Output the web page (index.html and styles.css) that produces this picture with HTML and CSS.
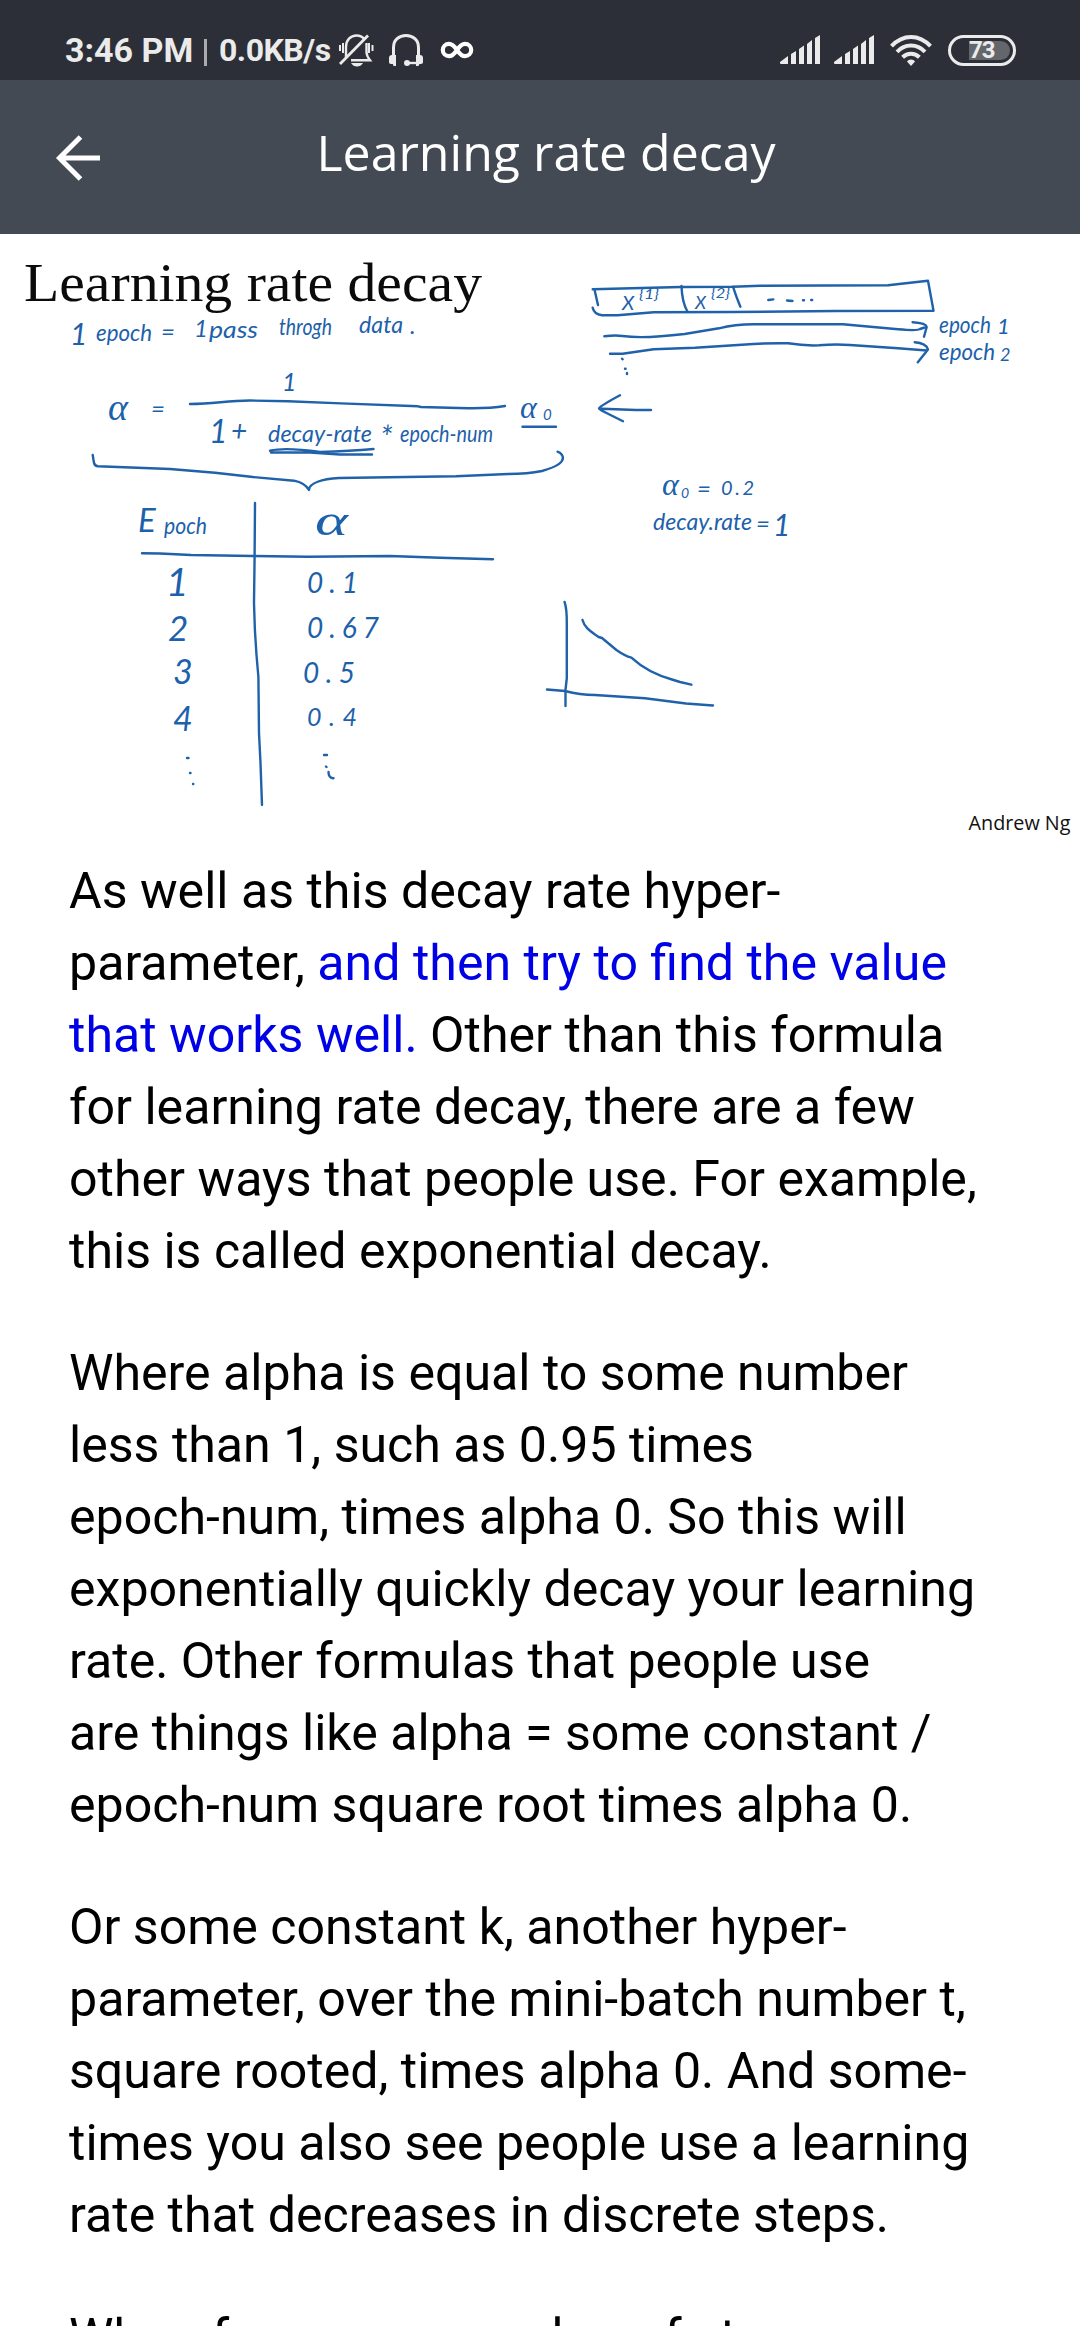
FILE: index.html
```html
<!DOCTYPE html>
<html lang="en">
<head>
<meta charset="utf-8">
<title>Learning rate decay</title>
<link rel="stylesheet" href="styles.css">
</head>
<body>
<div class="screen">
  <div class="status">
    <div class="status-left">
      <span class="clock">3:46 PM</span>
      <span class="bar"></span>
      <span class="speed">0.0KB/s</span>
      <svg class="bell" width="36" height="36" viewBox="0 0 36 36" fill="none" stroke="currentColor" stroke-width="2.4">
        <path d="M8 25V15C8 8 12.500 3.500 18.500 3.500c3.500 0 6 1.300 7.800 3.400M28.500 11v9c0 3 1 5 3.500 8.200H13"/>
        <path d="M2 32L30 3.500" stroke-width="2.800"/>
        <path d="M2 13v6M5 11v10M31 11v10M34.500 13v6" stroke-width="2"/>
        <path d="M13 31h12c-1.500 2.400-3.500 3.500-6 3.500S14.500 33.400 13 31z" fill="currentColor" stroke="none"/>
      </svg>
      <svg class="headset" width="36" height="36" viewBox="0 0 36 36" fill="none" stroke="currentColor" stroke-width="3">
        <path d="M5.500 25V15.500C5.500 8 11 3.500 18 3.500s12.500 4.500 12.500 12V25"/>
        <path d="M19 31h13" stroke-width="2.400"/>
        <circle cx="19" cy="31" r="3" fill="currentColor" stroke="none"/>
        <path d="M4 23h4v11H5.500l-.7-2H3c-1.300 0-2-.8-2-2v-4c0-2 1-3 3-3zM32 23h-4v11h2.500l.7-2H33c1.300 0 2-.8 2-2v-4c0-2-1-3-3-3z" fill="currentColor" stroke="none"/>
      </svg>
      <svg class="infinity" width="34" height="20" viewBox="0 0 34 20" fill="none" stroke="#fff" stroke-width="4.200">
        <path d="M17 10C14 5.500 12 3.800 9 3.800a6.200 6.200 0 0 0 0 12.400c3.500 0 5.500-2.500 8-6.200s4.500-6.200 8-6.200a6.200 6.200 0 0 1 0 12.400c-3 0-5-1.700-8-6.200z"/>
      </svg>
    </div>
    <div class="status-right">
      <svg class="signal" width="40" height="30" viewBox="0 0 40 30" fill="currentColor"><path d="M0 27l8-6v8H1q-1 0-1-1zM11 19l5-3v13h-5zM19 14l5-3.500V29h-5zM27 9l5-4v24h-5zM35 3l5-3v29h-5z"/></svg>
      <svg class="signal" width="40" height="30" viewBox="0 0 40 30" fill="currentColor"><path d="M0 27l8-6v8H1q-1 0-1-1zM11 19l5-3v13h-5zM19 14l5-3.500V29h-5zM27 9l5-4v24h-5zM35 3l5-3v29h-5z"/></svg>
      <svg class="wifi" width="42" height="31" viewBox="0 0 42 31" fill="none" stroke="currentColor" stroke-width="4">
        <path d="M1.500 11.200C13-1 29-1 40.500 11.200M7 16.800c8-8.300 20-8.300 28 0M12.600 22.300c5-4.800 11.800-4.800 16.800 0"/>
        <path d="M21 24.500c2 0 3 .8 4 2L21 31l-4-4.500c1-1.200 2-2 4-2z" fill="currentColor" stroke="none"/>
      </svg>
      <div class="battery"><div class="charge">73</div></div>
    </div>
  </div>

  <div class="header">
    <svg class="back" width="46" height="46" viewBox="0 0 46 46" fill="none" stroke="#fff" stroke-width="5"><path d="M45 23H4M25.500 2L4.500 23l21 21"/></svg>
    <h1>Learning rate decay</h1>
  </div>

  <div class="reader">
    <svg class="slide" width="1080" height="607" viewBox="0 234 1080 607">
      <text class="slide-title" x="24" y="301" textLength="458" lengthAdjust="spacingAndGlyphs">Learning rate decay</text>

      <g class="hand">
        <text x="70" y="345" font-size="30">1</text>
        <text x="96" y="341" textLength="56" lengthAdjust="spacingAndGlyphs">epoch</text>
        <text x="161" y="340">=</text>
        <text x="194" y="337" font-size="24">1</text>
        <text x="209" y="338" textLength="49" lengthAdjust="spacingAndGlyphs">pass</text>
        <text x="279" y="335" textLength="53" lengthAdjust="spacingAndGlyphs">throgh</text>
        <text x="359" y="333" textLength="44" lengthAdjust="spacingAndGlyphs">data</text>
        <text x="410" y="334">.</text>

        <text class="alpha" x="108" y="420" font-size="38">α</text>
        <text x="151" y="417">=</text>
        <text x="282" y="391" font-size="25">1</text>
        <text x="209" y="443" font-size="32">1</text>
        <text x="231" y="441" font-size="28">+</text>
        <text x="268" y="442" textLength="104" lengthAdjust="spacingAndGlyphs">decay-rate</text>
        <text x="380" y="449" font-size="32">*</text>
        <text x="400" y="442" textLength="93" lengthAdjust="spacingAndGlyphs">epoch-num</text>
        <text class="alpha" x="520" y="418" font-size="32">α</text>
        <text x="543" y="420" font-size="15">0</text>

        <text x="138" y="532" font-size="33">E</text>
        <text x="164" y="534" textLength="43" lengthAdjust="spacingAndGlyphs">poch</text>
        <text class="alpha" x="315" y="535" font-size="44" textLength="33" lengthAdjust="spacingAndGlyphs">α</text>
        <text x="166" y="596" font-size="39">1</text>
        <text x="168" y="641" font-size="35">2</text>
        <text x="173" y="684" font-size="34">3</text>
        <text x="173" y="731" font-size="34">4</text>
        <text x="307" y="593" font-size="28" textLength="51" lengthAdjust="spacing">0.1</text>
        <text x="307" y="638" font-size="28" textLength="72" lengthAdjust="spacing">0.67</text>
        <text x="303" y="683" font-size="28" textLength="52" lengthAdjust="spacing">0.5</text>
        <text x="307" y="726" font-size="25" textLength="50" lengthAdjust="spacing">0.4</text>

        <text x="622" y="310" font-size="20">X</text>
        <text x="639" y="299" font-size="13" textLength="20" lengthAdjust="spacingAndGlyphs">{1}</text>
        <text x="695" y="309" font-size="18">X</text>
        <text x="711" y="298" font-size="13" textLength="19" lengthAdjust="spacingAndGlyphs">{2}</text>
        <text x="939" y="333" textLength="52" lengthAdjust="spacingAndGlyphs">epoch</text>
        <text x="997" y="334" font-size="22">1</text>
        <text x="939" y="360" textLength="56" lengthAdjust="spacingAndGlyphs">epoch</text>
        <text x="1000" y="361" font-size="18">2</text>

        <text class="alpha" x="662" y="495" font-size="32">α</text>
        <text x="681" y="498" font-size="14">0</text>
        <text x="697" y="497">=</text>
        <text x="721" y="495" font-size="20" textLength="33" lengthAdjust="spacing">0.2</text>
        <text x="653" y="530" textLength="99" lengthAdjust="spacingAndGlyphs">decay.rate</text>
        <text x="756" y="532">=</text>
        <text x="773" y="536" font-size="30">1</text>
      </g>

      <g class="ink">
        <path d="M190 404C215 404 225 400.700 250 400.500L288 401.300C330 403 380 405 418 406.300L421 407L468 408.200Q490 408.500 505 406"/>
        <path d="M270 450.700Q285 447 320 452Q350 451 373.500 449M271 452.500L310 452.500L340 454.500H372"/>
        <path d="M522.500 426.700H556"/>
        <path d="M92.700 455L94 463Q95 466 98 466.300L170 469L215 472.700L253 477L294 480.700Q305 483 309 490C309 483 322 479 339 478L456 476.300L508 474Q528 474 542 471C556 467 566 462 562 455Q560 452 557.600 451.700"/>
        <path d="M255 503L254.600 557L254 603Q254.500 630 256.500 655L258.400 677L259 733L260.500 763L262 805"/>
        <path d="M142 553.300L160 553.500L191 555L253 556L308 556.700L390 556L440 557.700L493 559.300"/>
        <path d="M187 758h1.500M190 773h.5M193 784h.3M324 755h3M326 766.500l.5.500M328.500 772q0 6 5 6.300"/>
        <path d="M564.600 602Q567 609 566.800 625V678L565.500 690V706M547 689.500L565 691Q580 695 595 695L645 698.300L686 703.500L713 705.500"/>
        <path d="M582.500 620C585 629 592 632 598.600 637L602 638L616.400 650Q625 656 631.400 657.700Q648 673 672 679.500L680 682L691.400 684.700"/>

        <path d="M592.700 289.300L681 287L733 286.700L760 285.700L888 285.300L928 280.700L933.500 310.700L836 311L733 312L653.600 312.300L617.500 315.300H602Q594 314 592.700 307.700M594.400 289.300L598 305"/>
        <path d="M681.500 286Q682 302 687.400 311.500M733 286.700Q737 299 740.400 306.700M768.300 300l5-.6M787 300.500l5.500.5M803 300.300h1M811.200 300h1"/>
        <path d="M604.400 336.300Q615 335 622.600 336Q643 339 684.600 334L719 328.300Q735 324.300 753.500 324.300H843L898 329.300Q918 331 920 329L926 327M912.600 322.300Q926 323 926.700 327L924 336.700"/>
        <path d="M610 353.700H622.600L653.600 349.300L695 347.700L753.500 344Q770 343 788 343.300Q805 346 819 345.300Q835 344 850 345L898 348.300L927 350.500M914.700 342.300Q926 343 928 349.500L917.800 362.300"/>
        <path d="M622 358.700l.7.600M625 368.700h.6M627 373v1"/>
        <path d="M651 410H636L602 408.700M620 395.300Q600 406 599 408.500L602 410.700L623 421.300"/>
      </g>

      <text class="author" x="968.500" y="830" textLength="102" lengthAdjust="spacingAndGlyphs">Andrew Ng</text>
    </svg>

    <div class="text">
      <p>As well as this decay rate hyper-<br>parameter, <span class="mark">and then try to find the value<br>that works well.</span> Other than this formula<br>for learning rate decay, there are a few<br>other ways that people use. For example,<br>this is called exponential decay.</p>
      <p>Where alpha is equal to some number<br>less than 1, such as 0.95 times<br>epoch-num, times alpha 0. So this will<br>exponentially quickly decay your learning<br>rate. Other formulas that people use<br>are things like alpha = some constant /<br>epoch-num square root times alpha 0.</p>
      <p>Or some constant k, another hyper-<br>parameter, over the mini-batch number t,<br>square rooted, times alpha 0. And some-<br>times you also see people use a learning<br>rate that decreases in discrete steps.</p>
      <p><span class="lead">When</span> <span class="loose">for some number</span> of steps,</p>
    </div>
  </div>
</div>
</body>
</html>
```
FILE: styles.css
```css
body {
  margin: 0;
  background: #fff;
}

.screen {
  width: 1080px;
  height: 2340px;
  overflow: hidden;
  display: flex;
  flex-direction: column;
  background: #fff;
}

.status {
  height: 80px;
  flex: none;
  box-sizing: border-box;
  padding: 20px 64px 0 65px;
  display: flex;
  justify-content: space-between;
  align-items: center;
  background: #2c2f37;
  color: #ebebeb;
  font-family: Roboto, "Liberation Sans", sans-serif;
  font-weight: 700;
}

.status-left,
.status-right {
  display: flex;
  align-items: center;
}

.clock {
  width: 139px;
  font-size: 34px;
  line-height: 40px;
  white-space: nowrap;
}

.bar {
  width: 3px;
  height: 27px;
  margin-top: 5px;
  background: #a9abae;
}

.speed {
  width: 119px;
  margin-left: 12px;
  font-size: 32px;
  line-height: 40px;
  letter-spacing: -0.5px;
  white-space: nowrap;
}

.headset {
  margin-left: 14px;
}

.infinity {
  margin-left: 16px;
  margin-bottom: 1px;
}

.signal {
  margin-right: 14px;
}

.wifi {
  margin-left: 2px;
}

.battery {
  box-sizing: border-box;
  width: 68px;
  height: 31px;
  margin-left: 16px;
  padding: 3px 3px 3px 18px;
  border: 3px solid #ebebeb;
  border-radius: 16px;
}

.charge {
  height: 19px;
  border-radius: 0 10px 10px 0;
  background: #63666a;
  font-size: 24px;
  line-height: 19px;
  letter-spacing: -1px;
}

.header {
  height: 154px;
  flex: none;
  box-sizing: border-box;
  padding: 0 55px 10px;
  display: grid;
  grid-template-columns: 46px 1fr 34px;
  align-items: center;
  background: #444a53;
}

.back {
  margin-top: 12px;
}

.header h1 {
  margin: 0;
  color: #fff;
  font: 400 50px/70px "Open Sans", "Noto Sans", sans-serif;
  text-align: center;
}

.reader {
  height: 2092px;
  flex: none;
  overflow: hidden;
}

.slide {
  display: block;
}

.slide-title {
  font-family: "Liberation Serif", serif;
  font-size: 55px;
  fill: #0b0b0b;
}

.hand {
  font-family: Lato, "Open Sans", sans-serif;
  font-size: 24px;
  font-style: italic;
  fill: #1d61ab;
}

.alpha {
  font-family: "Liberation Serif", serif;
}

.ink {
  fill: none;
  stroke: #1f62aa;
  stroke-width: 2.4;
  stroke-linecap: round;
  stroke-linejoin: round;
}

.author {
  font-family: "Open Sans", "Noto Sans", sans-serif;
  font-size: 20px;
  fill: #111;
}

.text {
  padding: 14px 69px 0;
  color: #000;
  font: 400 50.1px/72px Roboto, "Liberation Sans", sans-serif;
  white-space: nowrap;
}

.text p {
  margin: 0 0 50px;
}

.mark {
  color: #0000e6;
}

.lead {
  margin-right: 4px;
}

.loose {
  word-spacing: 14px;
}
```
